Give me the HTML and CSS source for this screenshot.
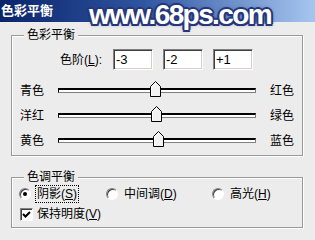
FILE: index.html
```html
<!DOCTYPE html>
<html lang="zh-CN">
<head>
    <meta charset="UTF-8">
    <title>色彩平衡</title>
    <link rel="stylesheet" href="styles.css">
</head>
<body>
    <div class="titlebar">
        <span class="title">色彩平衡</span>
        <span class="watermark">www.68ps.com</span>
    </div>

    <div class="dialog">
        <fieldset class="group balance">
            <legend>色彩平衡</legend>

            <div class="levels">
                <label class="levels-label">色阶(<u>L</u>):</label>
                <input class="level" value="-3">
                <input class="level" value="-2">
                <input class="level" value="+1">
            </div>

            <!-- left = (value + 100) / 200 * 187 -->
            <div class="slider-row">
                <span class="slider-label">青色</span>
                <div class="track">
                    <svg class="thumb" style="left: 90.7px" width="11" height="16" viewBox="0 0 11 16">
                        <polygon points="0.5,15.5 0.5,5.5 5.5,0.5 10.5,5.5 10.5,15.5" fill="#f2f2f2" stroke="#000"/>
                        <polyline points="1.5,14.5 1.5,6 5.5,2" fill="none" stroke="#fff"/>
                    </svg>
                </div>
                <span class="slider-label right">红色</span>
            </div>
            <div class="slider-row">
                <span class="slider-label">洋红</span>
                <div class="track">
                    <svg class="thumb" style="left: 91.6px" width="11" height="16" viewBox="0 0 11 16">
                        <polygon points="0.5,15.5 0.5,5.5 5.5,0.5 10.5,5.5 10.5,15.5" fill="#f2f2f2" stroke="#000"/>
                        <polyline points="1.5,14.5 1.5,6 5.5,2" fill="none" stroke="#fff"/>
                    </svg>
                </div>
                <span class="slider-label right">绿色</span>
            </div>
            <div class="slider-row">
                <span class="slider-label">黄色</span>
                <div class="track">
                    <svg class="thumb" style="left: 94.4px" width="11" height="16" viewBox="0 0 11 16">
                        <polygon points="0.5,15.5 0.5,5.5 5.5,0.5 10.5,5.5 10.5,15.5" fill="#f2f2f2" stroke="#000"/>
                        <polyline points="1.5,14.5 1.5,6 5.5,2" fill="none" stroke="#fff"/>
                    </svg>
                </div>
                <span class="slider-label right">蓝色</span>
            </div>
        </fieldset>

        <fieldset class="group tone">
            <legend>色调平衡</legend>

            <div class="tone-row">
                <div class="option first">
                    <span class="radio checked"></span>
                    <span class="option-text focused">阴影(<u>S</u>)</span>
                </div>
                <div class="option second">
                    <span class="radio"></span>
                    <span class="option-text">中间调(<u>D</u>)</span>
                </div>
                <div class="option">
                    <span class="radio"></span>
                    <span class="option-text">高光(<u>H</u>)</span>
                </div>
            </div>

            <div class="check-row">
                <span class="checkbox">
                    <svg width="9" height="9" viewBox="0 0 9 9">
                        <polyline points="1,4 3.5,6.5 8,2" fill="none" stroke="#000" stroke-width="2"/>
                    </svg>
                </span>
                <span class="option-text">保持明度(<u>V</u>)</span>
            </div>
        </fieldset>
    </div>
</body>
</html>
```

FILE: styles.css
```css
* {
    box-sizing: border-box;
}

body {
    margin: 0;
    width: 315px;
    height: 240px;
    overflow: hidden;
    background-color: #ececec;
    font-family: "Liberation Sans", "Noto Sans CJK SC", sans-serif;
    font-size: 12px;
    color: #000;
}

.titlebar {
    position: relative;
    height: 22px;
    background: linear-gradient(to right, #0a246a 0%, #2f55a0 45%, #a6c6f0 100%);
}

.title {
    display: block;
    padding: 3px 0 0 1px;
    color: #fff;
    font-size: 13px;
    font-weight: bold;
    line-height: 16px;
}

.watermark {
    position: absolute;
    left: 89px;
    top: -2px;
    font-size: 28px;
    font-weight: bold;
    line-height: 34px;
    letter-spacing: -1.6px;
    color: #fff;
    white-space: nowrap;
    text-shadow:
        2px 0 0 #26367a, -2px 0 0 #26367a, 0 2px 0 #26367a, 0 -2px 0 #26367a,
        1.5px 1.5px 0 #26367a, -1.5px 1.5px 0 #26367a, 1.5px -1.5px 0 #26367a, -1.5px -1.5px 0 #26367a,
        0 0 4px #26367a;
}

.dialog {
    padding: 6px 12px 0 11px;
}

.group {
    width: 292px;
    min-width: 0;
    margin: 0;
    padding: 0 8px;
    border: 1px solid #9a9a9a;
    box-shadow: inset 1px 1px 0 #fff, 1px 1px 0 #fff;
}

.group legend {
    margin-left: 4px;
    padding: 0 3px;
    line-height: 14px;
    background-color: #ececec;
}

.balance {
    padding-top: 7px;
    padding-bottom: 2px;
}

.tone {
    margin-top: 14px;
    padding-bottom: 3px;
}

.levels {
    display: flex;
    align-items: center;
    height: 21px;
    padding-left: 40px;
}

.levels-label {
    width: 53px;
    line-height: 14px;
}

.level {
    width: 40px;
    height: 21px;
    margin: 0 10px 0 0;
    padding: 0 0 0 2px;
    border: 1px solid;
    border-color: #808080 #fff #fff #808080;
    box-shadow: inset 1px 1px 0 #404040, inset -1px -1px 0 #d4d0c8;
    background-color: #fff;
    font-family: "Liberation Sans", sans-serif;
    font-size: 13px;
    color: #000;
    outline: none;
}

.slider-row {
    display: flex;
    align-items: center;
    height: 25px;
}

.levels + .slider-row {
    margin-top: 8px;
}

.slider-label {
    width: 38px;
    line-height: 14px;
}

.slider-label.right {
    width: auto;
    margin-left: 14px;
}

.track {
    position: relative;
    width: 198px;
    height: 5px;
    border-top: 2px solid #000;
    border-left: 1px solid #000;
    border-right: 1px solid #808080;
    border-bottom: 1px solid #808080;
    background-color: #fff;
}

.thumb {
    position: absolute;
    top: -9px;
    display: block;
}

.tone-row,
.check-row {
    display: flex;
    align-items: center;
    height: 20px;
}

.option {
    display: flex;
    align-items: center;
}

.option.first {
    width: 87px;
    margin-left: -1px;
}

.option.second {
    width: 106px;
}

.radio {
    position: relative;
    width: 12px;
    height: 12px;
    margin-right: 6px;
    border: 1px solid;
    border-color: #808080 #fff #fff #808080;
    border-radius: 50%;
    background-color: #fff;
    box-shadow: inset 1px 1px 0 #404040;
}

.radio.checked::after {
    content: "";
    position: absolute;
    left: 3px;
    top: 3px;
    width: 4px;
    height: 4px;
    border-radius: 50%;
    background-color: #000;
}

.option-text {
    line-height: 14px;
    white-space: nowrap;
}

.option-text.focused {
    outline: 1px dotted #000;
    outline-offset: 1px;
}

.checkbox {
    display: flex;
    align-items: center;
    justify-content: center;
    width: 13px;
    height: 13px;
    margin-right: 4px;
    border: 1px solid;
    border-color: #808080 #fff #fff #808080;
    box-shadow: inset 1px 1px 0 #404040;
    background-color: #fff;
}
```
